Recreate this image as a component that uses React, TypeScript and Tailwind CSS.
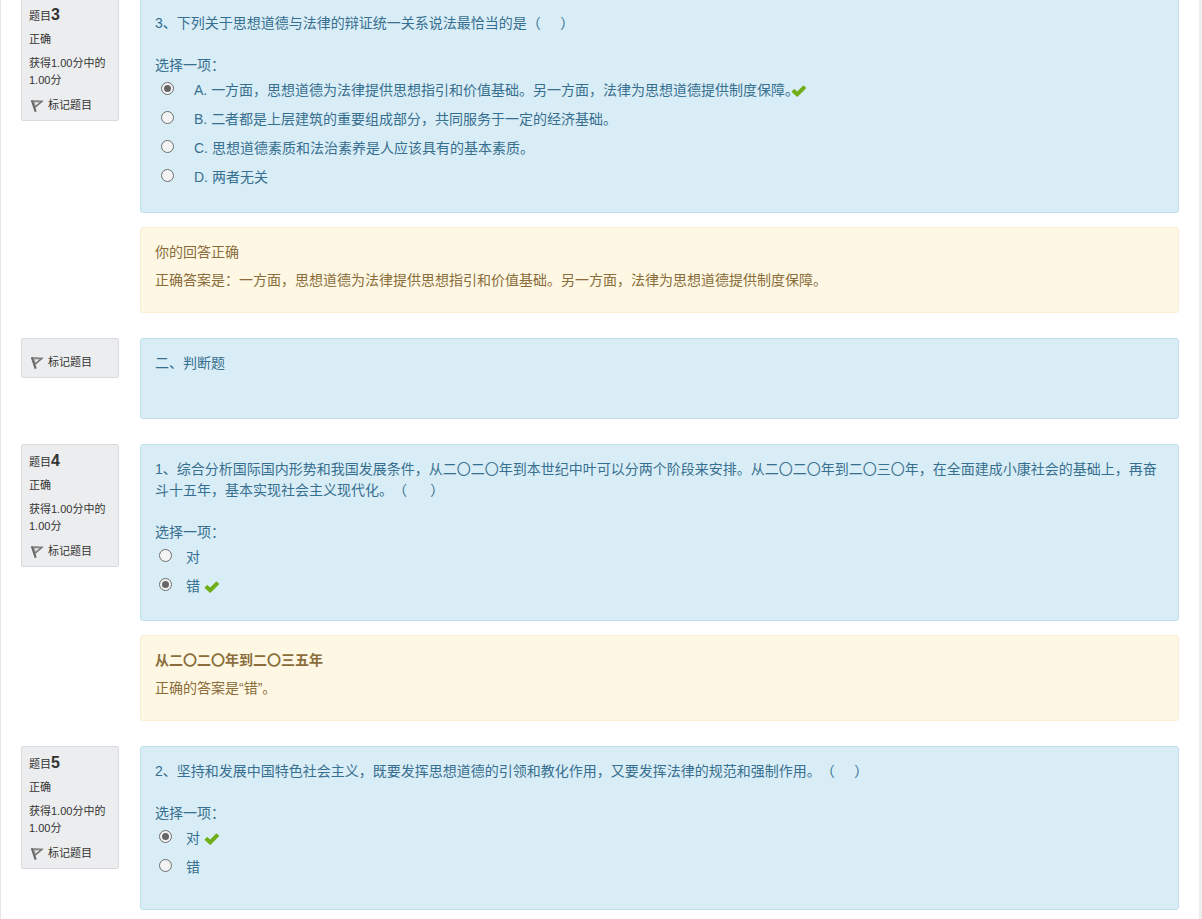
import { useState } from "react";
import clsx from "clsx";

type Option = {
  prefix?: string;
  text: string;
  correct?: boolean;
};

type Question = {
  id: string;
  number?: number;
  text: string;
  options?: Option[];
  selected?: number;
  feedback?: { title: string; bold?: boolean; answer: string };
  spacing: string;
};

const questions: Question[] = [
  {
    id: "q3",
    number: 3,
    text: "3、下列关于思想道德与法律的辩证统一关系说法最恰当的是（\u00a0\u00a0\u00a0\u00a0\u00a0）",
    options: [
      {
        prefix: "A.",
        text: "一方面，思想道德为法律提供思想指引和价值基础。另一方面，法律为思想道德提供制度保障。",
        correct: true,
      },
      { prefix: "B.", text: "二者都是上层建筑的重要组成部分，共同服务于一定的经济基础。" },
      { prefix: "C.", text: "思想道德素质和法治素养是人应该具有的基本素质。" },
      { prefix: "D.", text: "两者无关" },
    ],
    selected: 0,
    feedback: {
      title: "你的回答正确",
      answer:
        "正确答案是：一方面，思想道德为法律提供思想指引和价值基础。另一方面，法律为思想道德提供制度保障。",
    },
    spacing: "pb-5",
  },
  {
    id: "section2",
    text: "二、判断题",
    spacing: "pb-11",
  },
  {
    id: "q4",
    number: 4,
    text: "1、综合分析国际国内形势和我国发展条件，从二〇二〇年到本世纪中叶可以分两个阶段来安排。从二〇二〇年到二〇三〇年，在全面建成小康社会的基础上，再奋斗十五年，基本实现社会主义现代化。（\u00a0\u00a0\u00a0\u00a0\u00a0\u00a0）",
    options: [{ text: "对" }, { text: "错", correct: true }],
    selected: 1,
    feedback: {
      title: "从二〇二〇年到二〇三五年",
      bold: true,
      answer: "正确的答案是“错”。",
    },
    spacing: "pb-[19px]",
  },
  {
    id: "q5",
    number: 5,
    text: "2、坚持和发展中国特色社会主义，既要发挥思想道德的引领和教化作用，又要发挥法律的规范和强制作用。（\u00a0\u00a0\u00a0\u00a0\u00a0）",
    options: [{ text: "对", correct: true }, { text: "错" }],
    selected: 0,
    spacing: "pb-[27px]",
  },
];

function FlagIcon() {
  return (
    <svg width="14" height="14" viewBox="0 0 14 14" fill="none" className="shrink-0">
      <path d="M1 1.2 12.6 1.8 5.6 8.4 6.6 12.6H4.8Z" fill="#a9a9aa" />
      <path d="M1.8 1.2 5.6 12.6" stroke="#6a6a6a" strokeWidth="2" />
      <path d="M3.2 2 12.2 2.2 5.4 8" stroke="#707070" strokeWidth="1.2" />
      <path d="M5 3.4 5.8 6.2 8.8 3.4Z" fill="#f4f4f4" />
    </svg>
  );
}

function CheckIcon({ className }: { className?: string }) {
  return (
    <svg
      width="16"
      height="16"
      viewBox="0 0 16 16"
      role="img"
      aria-label="正确"
      className={clsx("shrink-0", className)}
    >
      <path
        d="M.9 8.2 2.8 6.2Q3.2 5.8 3.6 6.2L6.2 8.5 12 2.7Q12.5 2.3 13 2.7L14.9 4.6Q15.3 5 14.9 5.4L6.8 13.6Q6.2 14.1 5.6 13.6L.9 9.2Q.4 8.7.9 8.2Z"
        fill="#70ae18"
      />
    </svg>
  );
}

function QuestionInfo({ number }: { number?: number }) {
  const [flagged, setFlagged] = useState(false);

  return (
    <aside
      className={clsx(
        "flex w-[98px] shrink-0 flex-col gap-[7px] rounded-xs border border-[#d8dadd] bg-[#ecedee] px-[7px] pb-1.5 text-[11px] leading-[17px] text-[#333]",
        number ? "pt-1.5" : "pt-3.5"
      )}
    >
      {number && (
        <>
          <h3 className="h-[19px] leading-[19px]">
            题目<span className="text-base leading-[19px] font-bold">{number}</span>
          </h3>
          <div>正确</div>
          <div>获得1.00分中的1.00分</div>
        </>
      )}
      <button
        type="button"
        aria-pressed={flagged}
        onClick={() => setFlagged(!flagged)}
        className="mt-px flex cursor-pointer items-center gap-1 pl-px"
      >
        <FlagIcon />
        标记题目
      </button>
    </aside>
  );
}

function Answers({ question }: { question: Question }) {
  const [selected, setSelected] = useState(question.selected);

  return (
    <fieldset className="mt-[21px]">
      <legend>选择一项：</legend>
      {question.options?.map((option, i) => {
        const id = `${question.id}-${i}`;
        return (
          <div
            key={id}
            className={clsx("flex h-[29px] items-center", option.prefix ? "pl-1.5" : "pl-1")}
          >
            <input
              type="radio"
              id={id}
              name={question.id}
              checked={selected === i}
              onChange={() => setSelected(i)}
              className="mb-1 grid size-[13px] shrink-0 appearance-none place-items-center rounded-full border border-[#6e6e6e] bg-[#f3f3f3] before:size-[7px] before:rounded-full checked:before:bg-[#666]"
            />
            <label htmlFor={id} className={option.prefix ? "ml-5" : "ml-3.5"}>
              {option.prefix && `${option.prefix} `}
              {option.text}
            </label>
            {option.correct && <CheckIcon className={option.prefix ? "-ml-2" : "ml-1"} />}
          </div>
        );
      })}
    </fieldset>
  );
}

export default function App() {
  return (
    <div className="min-h-screen overflow-hidden border-r-[3px] border-l border-r-[#eee] border-l-[#e6e6e8] bg-white font-['Liberation_Sans','Noto_Sans_CJK_SC',sans-serif] [text-spacing-trim:space-all]">
      <main lang="zh-CN" className="-mt-0.5 flex flex-col gap-[25px] px-5">
        {questions.map((question) => (
          <section key={question.id} className="flex items-start gap-[21px]">
            <QuestionInfo number={question.number} />
            <div className="flex min-w-0 flex-1 flex-col gap-3.5 text-sm leading-[21px]">
              <div
                className={clsx(
                  "rounded-[3px] border border-[#bcdfeb] bg-[#d9edf6] px-3.5 pt-3.5 text-[#376f90]",
                  question.spacing
                )}
              >
                <p>{question.text}</p>
                {question.options && <Answers question={question} />}
              </div>
              {question.feedback && (
                <div className="flex flex-col gap-[7px] rounded-[3px] border border-[#f9eed0] bg-[#fdf7e3] px-3.5 pt-3.5 pb-[21px] text-[#8a6d3b]">
                  <p className={clsx(question.feedback.bold && "font-bold")}>
                    {question.feedback.title}
                  </p>
                  <p>{question.feedback.answer}</p>
                </div>
              )}
            </div>
          </section>
        ))}
      </main>
    </div>
  );
}
